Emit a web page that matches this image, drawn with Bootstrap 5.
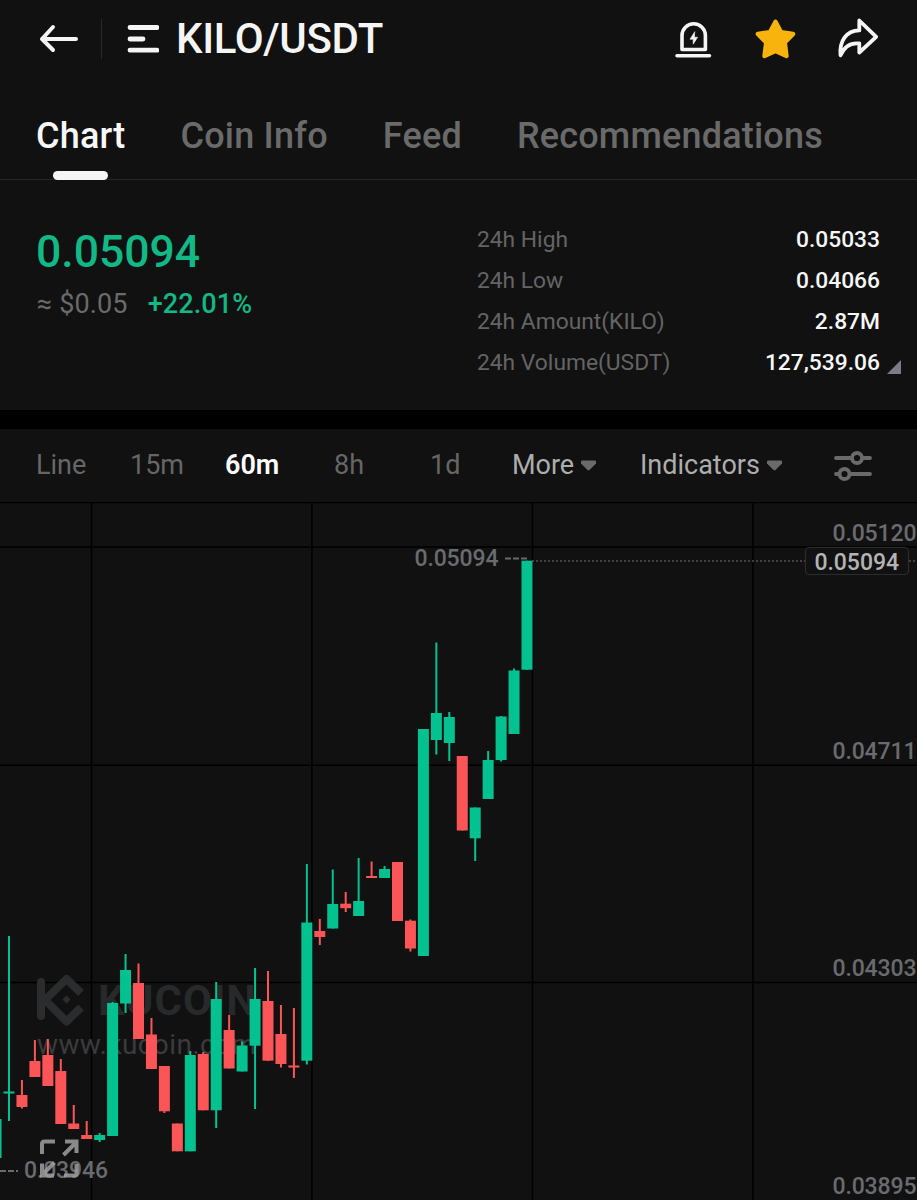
<!DOCTYPE html>
<html lang="en">
<head>
<meta charset="utf-8">
<meta name="viewport" content="width=device-width, initial-scale=1">
<title>KILO/USDT</title>
<link href="https://cdn.jsdelivr.net/npm/bootstrap@5.3.0/dist/css/bootstrap.min.css" rel="stylesheet">
<style>
  body { background: #111; color: #f5f5f5; font-family: Roboto, "Liberation Sans", sans-serif; overflow: hidden; }
  svg { display: block; flex: none; }
  .topbar { height: 80px; padding: 0 38px 2px 38px; }
  .topbar-actions { gap: 41px; }
  .rule-v { width: 1px; height: 40px; background: #292929; margin: 0 25px 0 21px; }
  .pair { font-size: 42px; font-weight: 500; line-height: 1; margin-left: 17px; letter-spacing: -.35px; }
  .tabs { height: 100px; padding: 0 36px; gap: 55px; border-bottom: 1px solid #262626; }
  .tabs .nav-link { position: relative; padding: 33px 0 0; font-size: 36px; font-weight: 500; line-height: 46px; letter-spacing: .2px; color: #6a6a6a; }
  .tabs .nav-link.active { color: #f8f8f8; }
  .tabs .nav-link.active::after { content: ""; position: absolute; left: 50%; bottom: -1px; width: 55px; height: 9px; margin-left: -28px; border-radius: 4.5px; background: #f5f5f5; }
  .summary { height: 230px; padding: 39px 37px 0 36px; }
  .price { font-size: 44.5px; font-weight: 500; line-height: 66px; color: #12b886; }
  .sub-price { font-size: 27px; line-height: 38px; gap: 20px; padding-left: 1px; letter-spacing: .13px; color: #6a6a6a; }
  .up { color: #12b886; font-weight: 500; }
  .stats { width: 403px; font-size: 22.8px; line-height: 41px; color: #646464; }
  .stats .stat-value { color: #f8f8f8; font-weight: 500; }
  .corner { position: absolute; right: -21px; bottom: 9px; }
  .divider { height: 19px; background: #000; }
  .intervals { display: grid; grid-template-columns: 94px 95px 109px 96px 82px 128px 193px 40px; align-items: center; height: 73px; padding-left: 36px; font-size: 27px; color: #666; line-height: 29px; }
  .menu-item { color: #adadad; }
  .menu-item svg { margin-left: 7px; }
  .chart text { font-size: 23px; font-weight: 500; fill: #696b6e; }
</style>
</head>
<body>
<header class="topbar d-flex align-items-center">
  <svg width="42" height="30" viewBox="0 0 42 30" fill="none" stroke="#f5f5f5" stroke-width="4" stroke-linecap="round" stroke-linejoin="round"><path d="M38 15H4M15 3 4 15l11 11"/></svg>
  <div class="rule-v"></div>
  <svg width="32" height="30" viewBox="0 0 32 30" stroke="#f5f5f5" stroke-width="4.800" stroke-linecap="round"><path d="M3 3.500h27M3 15h13M3 26.200h27"/></svg>
  <h1 class="pair mb-0">KILO/USDT</h1>
  <div class="topbar-actions d-flex align-items-center ms-auto">
    <svg width="38" height="42" viewBox="1 0 38 42" fill="none" stroke="#f5f5f5" stroke-width="3.600" stroke-linejoin="round" stroke-linecap="round"><path d="M8 31.500V17.500a11.700 11.700 0 0 1 23.400 0v14zM3 37.700h32.500"/><path d="M20.600 14l-4.600 7.200h3.200v5l4.400-7h-3z" fill="#f5f5f5" stroke-width=".6"/></svg>
    <svg width="42" height="42" viewBox="0 0 42 42" fill="#f8b30c" stroke="#f8b30c" stroke-width="4.400" stroke-linejoin="round"><path d="M21.500 3.700l5.600 10.500 12 1.700-8.300 8.600 1.700 13.500L21.500 33 10.500 38l1.700-13.500-8.300-8.600 12-1.700z"/></svg>
    <svg width="42" height="42" viewBox="0 0 42 42" fill="none" stroke="#f5f5f5" stroke-width="3.800" stroke-linejoin="round" stroke-linecap="round"><path d="M22.300 2.500 39.200 18.800 22.300 34.500V25.500C13.500 24.300 7.500 28.500 3.500 37.200 2.300 23 9 12.600 22.300 12.400z"/></svg>
  </div>
</header>

<nav class="tabs nav flex-nowrap">
  <a class="nav-link active">Chart</a>
  <a class="nav-link">Coin Info</a>
  <a class="nav-link">Feed</a>
  <a class="nav-link">Recommendations</a>
</nav>

<section class="summary d-flex justify-content-between align-items-start">
  <div>
    <div class="price">0.05094</div>
    <div class="sub-price d-flex"><span>≈ $0.05</span><span class="up">+22.01%</span></div>
  </div>
  <div class="stats position-relative">
    <div class="d-flex justify-content-between"><span>24h High</span><span class="stat-value">0.05033</span></div>
    <div class="d-flex justify-content-between"><span>24h Low</span><span class="stat-value">0.04066</span></div>
    <div class="d-flex justify-content-between"><span>24h Amount(KILO)</span><span class="stat-value">2.87M</span></div>
    <div class="d-flex justify-content-between"><span>24h Volume(USDT)</span><span class="stat-value">127,539.06</span></div>
    <svg class="corner" width="14" height="14"><path d="M14 0v14H0z" fill="#7a7d84"/></svg>
  </div>
</section>
<div class="divider"></div>

<div class="intervals">
  <span>Line</span>
  <span>15m</span>
  <span class="text-white fw-semibold">60m</span>
  <span>8h</span>
  <span>1d</span>
  <span class="menu-item d-flex align-items-center">More<svg width="15" height="11"><path d="M1 .500h13q1 0 1 1v2L8.500 10q-1 .8-2 0L0 3.500v-2q0-1 1-1z" fill="#6a6a6a"/></svg></span>
  <span class="menu-item d-flex align-items-center">Indicators<svg width="15" height="11"><path d="M1 .500h13q1 0 1 1v2L8.500 10q-1 .8-2 0L0 3.500v-2q0-1 1-1z" fill="#6a6a6a"/></svg></span>
  <svg width="40" height="32" viewBox="0 0 40 32" fill="none" stroke="#6a6a6a" stroke-width="3.800" stroke-linecap="round"><path d="M3 8h15M30 8h7M3 24h2M17 24h20"/><circle cx="24" cy="8" r="5"/><circle cx="11.500" cy="24" r="5"/></svg>
</div>

<svg class="chart" width="917" height="698" viewBox="0 502 917 698">
  <g id="grid" stroke="#000" stroke-width="1.500"><path d="M0 502.500H917M0 547H917M0 765.200H917M0 982.500H917M91.500 503V1200M311.900 503V1200M532.500 503V1200M753 503V1200"/></g>
  <!-- watermark behind the candles -->
  <g fill="none" stroke="#2b2c2d" stroke-width="8" stroke-linejoin="round">
    <path stroke-linecap="round" d="M41 982v34"/>
    <path d="M81 993 66.500 979 45 1000l21.500 21.500L81 1007.500"/>
    <path d="M66.500 995.500l4 4-4 4-4-4z" fill="#2b2c2d" stroke="none"/>
  </g>
  <text x="98" y="1014.500" textLength="158" style="font-size:42px;font-weight:700;fill:#28292a">KUCOIN</text>
  <text x="37" y="1054" textLength="219" style="font-size:28px;font-weight:400;fill:#3a3b3c">www.kucoin.com</text>
  <path d="M532 561H805M909 561H917" stroke="#515356" stroke-width="1.500" stroke-dasharray="2 2"/>
  <g id="candles"></g>
  <text x="414.500" y="566" textLength="84">0.05094</text>
  <path d="M505 558.500H527M0 1171H18" stroke="#696b6e" stroke-width="2" stroke-dasharray="6 2"/>
  <text x="832.500" y="540.500" textLength="84">0.05120</text>
  <text x="832.500" y="758.500" textLength="84">0.04711</text>
  <text x="832.500" y="976" textLength="84">0.04303</text>
  <text x="832.500" y="1194" textLength="84">0.03895</text>
  <rect x="805.500" y="547.500" width="103" height="27" rx="4" fill="#111" stroke="#2c2c2c" stroke-width="1.200"/>
  <text x="814.500" y="570" textLength="84.500" style="fill:#b4b4b4">0.05094</text>
  <text x="24" y="1178" textLength="84">0.03946</text>
  <g fill="none" stroke="#a0a0a0" stroke-opacity=".85" stroke-width="4"><path d="M42 1154v-10q0-2.500 2.500-2.500H55M76.500 1164v9q0 2.500-2.500 2.500H64M63.500 1155 76 1142.500M65 1141.500H76.500V1153M54.500 1162.500 42 1175M42 1163.500V1175.500H54"/></g>
</svg>

<script src="https://cdn.jsdelivr.net/npm/bootstrap@5.3.0/dist/js/bootstrap.bundle.min.js"></script>
<script>
  // u/d = direction, then high, body top, body bottom, low
  const candles = [
    ['u',1119,1119,1158,1158],['u',936,1091.5,1093.5,1121],['d',1080,1095,1107,1108.5],['d',1040,1061,1077,1077],
    ['d',1039,1055,1086,1086],['d',1059,1071,1124,1124],['d',1105,1123.5,1129,1129],['d',1121,1135,1139,1139],
    ['u',1133,1135,1140,1142],['u',1002,1003,1136,1136],['u',954,970,1003.5,1013],['d',963.5,983,1039,1039],
    ['d',1018,1034.5,1069,1069],['d',1066,1066,1111.3,1113],['d',1123.5,1123.5,1151.3,1151.3],['u',1051,1055,1151.3,1151.3],
    ['d',1052,1054,1110.3,1110.3],['u',982,999,1110.3,1128],['d',1015,1030,1068.5,1068.5],['u',1041.5,1045.5,1071.5,1071.5],
    ['u',968,999,1045.7,1109],['d',971,1001,1060.7,1060.7],['d',1005,1034,1064,1067.5],['d',1008,1065.5,1067.5,1078],
    ['u',864,922.5,1060.7,1064.5],['d',919,931,937,945],['u',869.5,904,928.5,928.5],['d',892,903.7,908.2,912],
    ['u',858,901,916,916],['d',861.5,876,878,878],['u',866,869,878,878],['d',862,862,921,921],
    ['d',919.5,920.7,948.5,951.5],['u',729,729,956,956],['u',642.5,713,740,754.5],['u',712,717,743,761],
    ['d',756,756,830.5,830.5],['u',807.5,807.5,838.3,861],['u',751,760,799,799],['u',716,716.5,760,761.5],
    ['u',668.5,670.5,734,734],['u',560.7,560.7,669.7,669.7]
  ];
  document.getElementById('candles').innerHTML = candles.map(([dir, high, top, bottom, low], i) => {
    const x = 9 + 12.95 * (i - 1), fill = dir === 'u' ? '#04c28f' : '#fb5558';
    return `<g fill="${fill}"><rect x="${x - 1}" y="${high}" width="2" height="${low - high}"/>` +
           `<rect x="${x - 5.5}" y="${top}" width="11" height="${bottom - top}"/></g>`;
  }).join('');
</script>
</body>
</html>
